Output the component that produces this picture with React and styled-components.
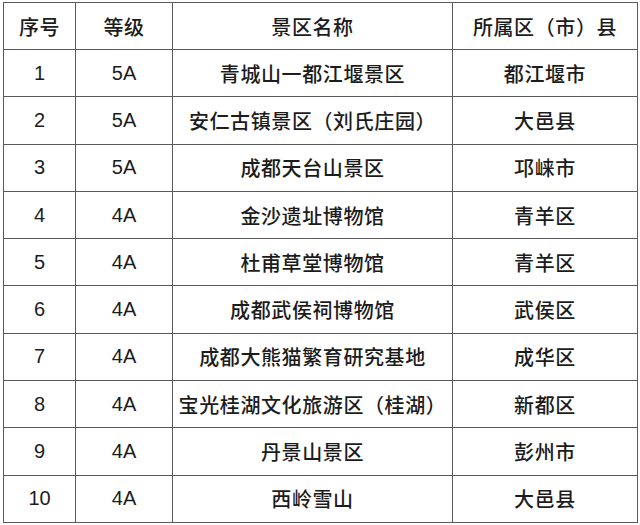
import styled, { createGlobalStyle } from 'styled-components';

const rows = [
    ['1', '5A', '青城山一都江堰景区', '都江堰市'],
    ['2', '5A', '安仁古镇景区（刘氏庄园）', '大邑县'],
    ['3', '5A', '成都天台山景区', '邛崃市'],
    ['4', '4A', '金沙遗址博物馆', '青羊区'],
    ['5', '4A', '杜甫草堂博物馆', '青羊区'],
    ['6', '4A', '成都武侯祠博物馆', '武侯区'],
    ['7', '4A', '成都大熊猫繁育研究基地', '成华区'],
    ['8', '4A', '宝光桂湖文化旅游区（桂湖）', '新都区'],
    ['9', '4A', '丹景山景区', '彭州市'],
    ['10', '4A', '西岭雪山', '大邑县'],
];

export default function App() {
    return (
        <>
            <GlobalStyle />
            <Table>
                <colgroup>
                    <col style={{ width: '72px' }} />
                    <col style={{ width: '97px' }} />
                    <col style={{ width: '280px' }} />
                    <col />
                </colgroup>
                <thead>
                    <tr>
                        <Cell as="th" $cjk>序号</Cell>
                        <Cell as="th" $cjk>等级</Cell>
                        <Cell as="th" $cjk>景区名称</Cell>
                        <Cell as="th" $cjk>所属区（市）县</Cell>
                    </tr>
                </thead>
                <tbody>
                    {rows.map((r) => (
                        <tr key={r[0]}>
                            <Cell>{r[0]}</Cell>
                            <Cell>{r[1]}</Cell>
                            <Cell $cjk>{r[2]}</Cell>
                            <Cell $cjk>{r[3]}</Cell>
                        </tr>
                    ))}
                </tbody>
            </Table>
        </>
    );
}

const GlobalStyle = createGlobalStyle`
    body {
        margin: 0;
        background: #fff;
    }
`;

const Table = styled.table`
    margin: 2px 0 0 3px;
    width: 635px;
    height: 521px;
    border-collapse: collapse;
    table-layout: fixed;
    color: #1c1c1c;
`;

const Cell = styled.td`
    border: 1px solid #5a5a5a;
    text-align: center;
    vertical-align: middle;
    padding: 0;
    height: 46px;
    white-space: nowrap;
    font-family: ${(p) =>
        p.$cjk
            ? "'Noto Sans CJK SC', sans-serif"
            : "'Liberation Sans', 'Noto Sans CJK SC', sans-serif"};
    font-size: 20px;
    font-weight: ${(p) => (p.$cjk ? 500 : 400)};
    letter-spacing: ${(p) => (p.$cjk ? '0.6px' : '0')};
`;
